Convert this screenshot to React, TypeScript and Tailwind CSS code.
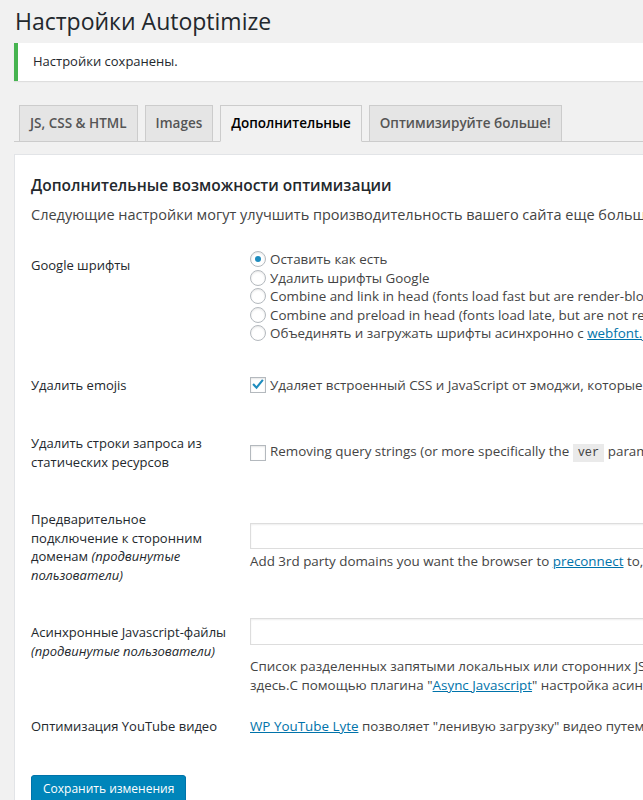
import React from "react";

const tabs = [
  { label: "JS, CSS & HTML", active: false },
  { label: "Images", active: false },
  { label: "Дополнительные", active: true },
  { label: "Оптимизируйте больше!", active: false },
];

const fontOptions = [
  { label: "Оставить как есть", checked: true },
  { label: "Удалить шрифты Google", checked: false },
  { label: "Combine and link in head (fonts load fast but are render-blocking)", checked: false },
  { label: "Combine and preload in head (fonts load late, but are not render-blocking)", checked: false },
];

function Radio({ checked }: { checked?: boolean }) {
  return (
    <span className="w-4 h-4 rounded-full border border-[#b4b9be] bg-white shadow-[inset_0_1px_2px_rgba(0,0,0,0.1)] flex items-center justify-center shrink-0">
      {checked && <span className="w-[6px] h-[6px] rounded-full bg-[#1e8cbe]" />}
    </span>
  );
}

function Checkbox({ checked }: { checked?: boolean }) {
  return (
    <span className="w-4 h-4 border border-[#b4b9be] bg-white shadow-[inset_0_1px_2px_rgba(0,0,0,0.1)] flex items-center justify-center shrink-0">
      {checked && (
        <svg viewBox="0 0 16 16" className="w-[15px] h-[15px]">
          <path d="M3.2 8.4 L6.3 11.6 L12.8 3.6" fill="none" stroke="#1e8cbe" strokeWidth="2.4" strokeLinecap="square" />
        </svg>
      )}
    </span>
  );
}

export default function App() {
  return (
    <div className="min-h-screen w-[643px] overflow-hidden bg-[#f1f1f1] font-['Open_Sans','Noto_Sans',sans-serif] text-[#444]">
      <div className="w-[1000px] pl-[14px]">
        {/* Title */}
        <h1 className="pt-[7px] pl-px text-[23px] leading-[29px] font-normal text-[#23282d]">
          Настройки Autoptimize
        </h1>

        {/* Saved notice */}
        <div className="mt-[7px] h-[38px] flex items-center bg-white border-l-4 border-[#46b450] shadow-[0_1px_1px_rgba(0,0,0,0.08)] pl-[15px]">
          <p className="text-[13px] font-medium text-[#23282d]">Настройки сохранены.</p>
        </div>

        {/* Tabs */}
        <div className="mt-[24px] flex items-end gap-[7px] border-b border-[#ccc] pl-[5px] h-[37px]">
          {tabs.map((t) => (
            <div
              key={t.label}
              className={
                t.active
                  ? "-mb-px h-[37px] px-[10px] flex items-center border border-[#ccc] border-b-[#f1f1f1] bg-[#f1f1f1] text-[13.5px] font-semibold text-black"
                  : "h-[36px] px-[10px] flex items-center border border-[#ccc] border-b-0 bg-[#e5e5e5] text-[13.5px] font-semibold text-[#555]"
              }
            >
              {t.label}
            </div>
          ))}
        </div>

        {/* Settings panel */}
        <div className="mt-[12px] bg-white border border-[#e2e4e7] pl-[16px] h-[700px]">
          <h2 className="mt-[19px] text-[15.5px] leading-[22px] font-semibold text-[#23282d]">
            Дополнительные возможности оптимизации
          </h2>
          <p className="mt-[9px] text-[14.5px] leading-[20px] whitespace-nowrap">
            Следующие настройки могут улучшить производительность вашего сайта еще больше, но рекомендуем протестировать их.
          </p>

          <div className="text-[13px] leading-[18.5px]">
            {/* Google fonts */}
            <div className="mt-[25px] flex">
              <div className="w-[219px] mt-[6px] text-[#23282d]">Google шрифты</div>
              <div className="flex flex-col text-[13.4px]">
                {fontOptions.map((o) => (
                  <div key={o.label} className="flex items-center gap-[4px] whitespace-nowrap">
                    <Radio checked={o.checked} />
                    <span>{o.label}</span>
                  </div>
                ))}
                <div className="flex items-center gap-[4px] whitespace-nowrap">
                  <Radio />
                  <span>
                    Объединять и загружать шрифты асинхронно с{" "}
                    <a className="text-[#0073aa] underline">webfont.js</a>
                  </span>
                </div>
              </div>
            </div>

            {/* Emojis */}
            <div className="mt-[33px] flex">
              <div className="w-[219px] text-[#23282d]">Удалить emojis</div>
              <div className="flex items-center gap-[4px] whitespace-nowrap text-[13.4px]">
                <Checkbox checked />
                <span>Удаляет встроенный CSS и JavaScript от эмоджи, которые добавляет WordPress</span>
              </div>
            </div>

            {/* Query strings */}
            <div className="mt-[40px] flex items-center">
              <div className="w-[219px] text-[#23282d]">
                Удалить строки запроса из
                <br />
                статических ресурсов
              </div>
              <div className="flex items-center gap-[4px] whitespace-nowrap text-[13.4px]">
                <Checkbox />
                <span>
                  Removing query strings (or more specifically the{" "}
                  <code className="bg-[#eaeaea] px-[5px] py-[2px] font-['Liberation_Mono',monospace] text-[12px]">ver</code>{" "}
                  parameter) will not improve load time.
                </span>
              </div>
            </div>

            {/* Preconnect */}
            <div className="mt-[39px] flex">
              <div className="w-[219px] text-[#23282d]">
                Предварительное
                <br />
                подключение к сторонним
                <br />
                доменам <em>(продвинутые</em>
                <br />
                <em>пользователи)</em>
              </div>
              <div className="mt-[13px] flex flex-col text-[13.4px]">
                <div className="w-[600px] h-[26px] border border-[#ddd] shadow-[inset_0_1px_2px_rgba(0,0,0,0.07)] bg-white" />
                <div className="mt-[3px] whitespace-nowrap">
                  Add 3rd party domains you want the browser to{" "}
                  <a className="text-[#0073aa] underline">preconnect</a> to, separated by comma.
                </div>
              </div>
            </div>

            {/* Async JS */}
            <div className="mt-[34px] flex">
              <div className="w-[219px] mt-[5px] text-[#23282d]">
                Асинхронные Javascript-файлы
                <br />
                <em>(продвинутые пользователи)</em>
              </div>
              <div className="flex flex-col text-[13.4px]">
                <div className="w-[600px] h-[27px] border border-[#ddd] shadow-[inset_0_1px_2px_rgba(0,0,0,0.07)] bg-white" />
                <div className="mt-[12px] whitespace-nowrap">
                  Список разделенных запятыми локальных или сторонних JS-файлов, которые должны загружаться асинхронно
                  <br />
                  здесь.С помощью плагина "<a className="text-[#0073aa] underline">Async Javascript</a>" настройка асинхронной загрузки
                </div>
              </div>
            </div>

            {/* YouTube */}
            <div className="mt-[23px] flex">
              <div className="w-[219px] text-[#23282d]">Оптимизация YouTube видео</div>
              <div className="whitespace-nowrap text-[13.4px]">
                <a className="text-[#0073aa] underline">WP YouTube Lyte</a> позволяет "ленивую загрузку" видео путем
                замены их на изображения
              </div>
            </div>
          </div>

          {/* Save button */}
          <button className="mt-[39px] h-[28px] px-[11px] rounded-[3px] bg-[#0085ba] border border-[#0073aa] shadow-[0_1px_0_#006799] text-white text-[12px] leading-[26px]">
            Сохранить изменения
          </button>
        </div>
      </div>
    </div>
  );
}
